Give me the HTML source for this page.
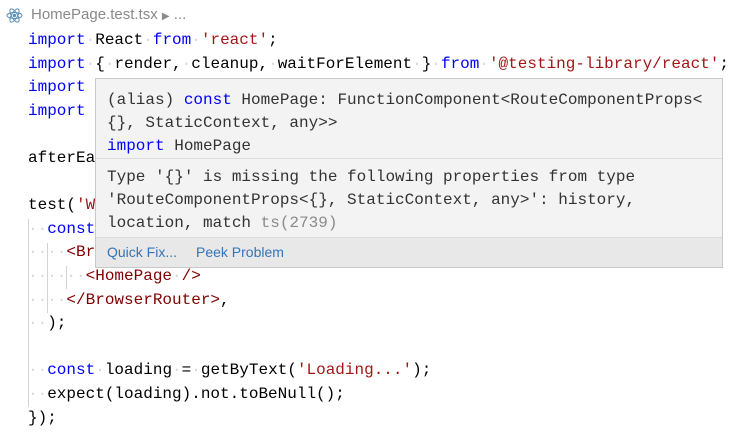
<!DOCTYPE html>
<html><head><meta charset="utf-8"><style>
body{margin:0;width:736px;height:437px;background:#fff;overflow:hidden;position:relative;font-family:"Liberation Mono",monospace;}
.code{position:absolute;left:28px;top:29px;font-size:16px;line-height:23.6px;white-space:pre;color:#000;}
.k{color:#0000ff}.s{color:#a31515}.t{color:#800000}.d{color:#d8d8d8}
.g{position:absolute;width:1px;background:#d3d3d3}
.hdr{position:absolute;left:31px;top:6px;font-family:"Liberation Sans",sans-serif;font-size:15px;color:#8a8a8a}
.tip{position:absolute;left:95px;top:78px;width:628px;height:190px;background:#f3f3f3;border:1px solid #c8c8c8;box-sizing:border-box;}
.tt{position:absolute;left:11px;font-size:16px;line-height:23px;white-space:pre;color:#333}
.sep{position:absolute;left:0;right:0;height:1px;background:#dcdcdc}
.foot{position:absolute;left:0;right:0;bottom:0;height:29px;background:#e8e8e8;border-top:1px solid #dcdcdc;font-family:"Liberation Sans",sans-serif;font-size:14px;color:#3474b8}
.foot span{position:absolute;top:6px}
</style></head><body>
<svg style="position:absolute;left:6px;top:7px" width="17" height="17" viewBox="0 0 17 17" fill="none" stroke="#5a8fb8" stroke-width="1"><ellipse cx="8.5" cy="8.5" rx="7.5" ry="3"/><ellipse cx="8.5" cy="8.5" rx="7.5" ry="3" transform="rotate(60 8.5 8.5)"/><ellipse cx="8.5" cy="8.5" rx="7.5" ry="3" transform="rotate(120 8.5 8.5)"/><circle cx="8.5" cy="8.5" r="1.2" fill="#5a8fb8"/></svg>
<div class="hdr">HomePage.test.tsx <span style="font-size:10px">&#9654;</span> ...</div>
<div class="g" style="left:28px;top:219px;height:188px"></div>
<div class="g" style="left:47px;top:243px;height:70px"></div>
<div class="g" style="left:66px;top:266px;height:23px"></div>
<div class="code"><span class="k">import</span><span class="d">·</span>React<span class="d">·</span><span class="k">from</span><span class="d">·</span><span class="s">'react'</span>;
<span class="k">import</span><span class="d">·</span>{<span class="d">·</span>render,<span class="d">·</span>cleanup,<span class="d">·</span>waitForElement<span class="d">·</span>}<span class="d">·</span><span class="k">from</span><span class="d">·</span><span class="s">'@testing-library/react'</span>;
<span class="k">import</span>
<span class="k">import</span>

afterEa

test(<span class="s">'W</span>
<span class="d">··</span><span class="k">const</span>
<span class="d">····</span><span class="t">&lt;Br</span>
<span class="d">······</span><span class="t">&lt;HomePage</span><span class="d">·</span><span class="t">/&gt;</span>
<span class="d">····</span><span class="t">&lt;/BrowserRouter&gt;</span>,
<span class="d">··</span>);

<span class="d">··</span><span class="k">const</span><span class="d">·</span>loading<span class="d">·</span>=<span class="d">·</span>getByText(<span class="s">'Loading...'</span>);
<span class="d">··</span>expect(loading).not.toBeNull();
});</div>
<div class="tip">
<div class="tt" style="top:10px">(alias) <span class="k">const</span> HomePage: FunctionComponent&lt;RouteComponentProps&lt;
{}, StaticContext, any&gt;&gt;
<span class="k">import</span> HomePage</div>
<div class="sep" style="top:79px"></div>
<div class="tt" style="top:87px">Type '{}' is missing the following properties from type
'RouteComponentProps&lt;{}, StaticContext, any&gt;': history,
location, match <span style="color:#8a8a8a">ts(2739)</span></div>
<div class="foot"><span style="left:11px">Quick Fix...</span><span style="left:100px">Peek Problem</span></div>
</div>
</body></html>
